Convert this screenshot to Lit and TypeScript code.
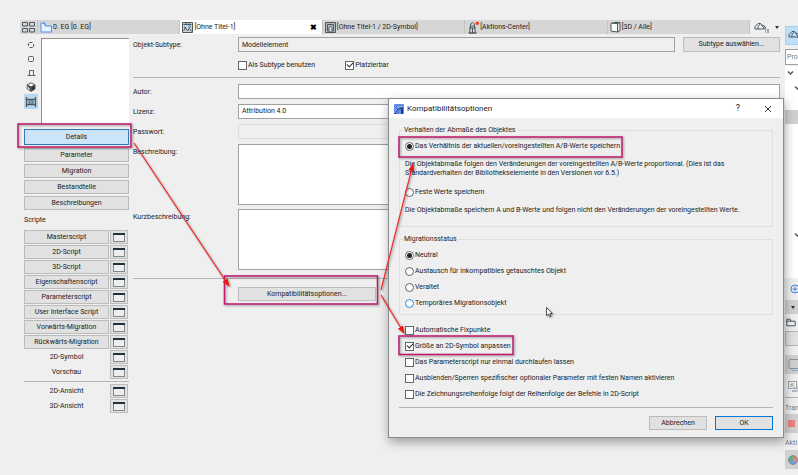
import { LitElement, html, css, svg, nothing } from "lit";
import { customElement, state } from "lit/decorators.js";
import { classMap } from "lit/directives/class-map.js";

const PAGES = ["Details", "Parameter", "Migration", "Bestandteile", "Beschreibungen"];

const SCRIPTS = [
  "Masterscript",
  "2D-Script",
  "3D-Script",
  "Eigenschaftenscript",
  "Parameterscript",
  "User Interface Script",
  "Vorwärts-Migration",
  "Rückwärts-Migration",
];

const STATES = [
  "Neutral",
  "Austausch für inkompatibles getauschtes Objekt",
  "Veraltet",
  "Temporäres Migrationsobjekt",
];

const OPTIONS = [
  "Automatische Fixpunkte",
  "Größe an 2D-Symbol anpassen",
  "Das Parameterscript nur einmal durchlaufen lassen",
  "Ausblenden/Sperren spezifischer optionaler Parameter mit festen Namen aktivieren",
  "Die Zeichnungsreihenfolge folgt der Reihenfolge der Befehle in 2D-Script",
];

const INK = "#4a575e";

const icon = (w: number, h: number, body: unknown) => html`<svg
  class="icon"
  width=${w}
  height=${h}
  viewBox="0 0 ${w} ${h}"
  fill="none"
  stroke=${INK}
  aria-hidden="true"
>
  ${body}
</svg>`;

const icons = {
  grid: icon(13, 11, svg`<path d="M.5.5h5v3.500h-5zM7.500.5h5v3.500h-5zM.5 6.500h5V10h-5zM7.500 6.500h5V10h-5z"/>`),
  story: icon(12, 11, svg`<path d="M1 .8h3.500l1 3.200h6v6H1z" fill="#e6f1ff" stroke="#4c8df0"/><path d="M3 1.500h2v2" stroke="#4c8df0"/>`),
  object: icon(11, 11, svg`<path d="M.5.5h10v10H.5z" fill="#cfd6d9"/><path d="M1.500 2.500h8M4 1v2M7 1v2M1.500 9l2-3.500L5.500 9l2.500-3.500M8 7l1.500 2.500M2 5l2 1"/><circle cx="7.500" cy="4.500" r="1.300" fill="#5b9bea" stroke="none"/>`),
  symbol: icon(11, 11, svg`<path d="M.5.5h10v10H.5z" fill="#b5bcc0"/><path d="M2.500 9V2.500h6V9z"/><path d="M4 9V5.500l1.500-1.300L7 5.500V9" fill="#dfe5e8"/>`),
  tower: icon(12, 13, svg`<path d="M3 5h5M2 7h7M3.500 5l-1 7h6l-1-7M3.500 5V3L5.500 1.500 7.500 3v2M1.500 12h8M5.500 7v5"/><circle cx="10.300" cy="2.300" r="1.700" fill="#ff3b1f" stroke="none"/>`),
  cube: icon(11, 11, svg`<path d="M1 1.500h6.500v8.500L1 9z" fill="#fff"/><path d="M1 1.500L3.500.5H10v8L7.500 10V1.700L10 .5" fill="#e3e7e9"/>`),
  house: icon(15, 11, svg`<path d="M1 7V4.500L4 1.500h2.500L10.500 7zM6.500 1.500L4 4.500V7M8 3l2.500 1 1.500 3"/><path d="M11 8h1M13 8h2M11 10h1M13 10h2"/>`),
  rotate: icon(8, 8, svg`<path d="M1.500 5V2.500l1-1h3M6.500 3v2.500l-1 1h-3M1 3.500l.5 1M7 4.500l-.5-1" stroke="#59656b"/>`),
  square: icon(8, 8, svg`<rect x="1.500" y="1.500" width="5" height="5" rx="1" stroke="#59656b"/>`),
  front: icon(9, 8, svg`<path d="M2.500 6V1.500h4V6M.5 6.500h8" stroke="#59656b"/>`),
  solid: icon(10, 10, svg`<path d="M5 .8l3.800 2v4.200L5 9.200 1.200 7V2.800z" fill="#fff"/><path d="M5 5l3.800-2.200v4.200L5 9.200zM1.200 2.800L5 5v4.200" fill="#22303a"/>`),
  film: icon(12, 10, svg`<path d="M1.500 0v10M10.500 0v10M1.500 2.500h9M1.500 7.500h9" stroke-width="1.300"/><rect x="4" y="4" width="4" height="2" fill="#cfe0ee"/>`),
  window: icon(12, 9, svg`<rect x=".5" y=".5" width="11" height="8" fill="#eee" stroke="#7d888d"/><path d="M0 1h12" stroke="#22303a" stroke-width="2"/>`),
  chevron: icon(7, 6, svg`<path d="M1 1.500l2.500 2.500L6 1.500" stroke-width="1.400"/>`),
  plus: icon(10, 10, svg`<circle cx="5" cy="5" r="4" stroke="#3c86e8"/><path d="M5 2.500v5M2.500 5h5" stroke="#3c86e8"/>`),
  folder: icon(10, 9, svg`<path d="M.8 7.800V1.200h3.400l.8 2h4.200v4.600zM.8 3.200H5"/>`),
  screen: icon(13, 14, svg`<path d="M4 10.500v2h9" stroke="#7fa9e0"/><rect x="1" y="1.500" width="13" height="9" rx="1" stroke="#8d9498"/>`),
  resize: icon(12, 12, svg`<rect x="1.500" y="1.500" width="8" height="7" stroke="#a0a5a8"/><path d="M4 4l4 4M4 7V4h3M5 11h6V6" stroke="#a0a5a8"/><path d="M5 11h4" stroke="#7fa9e0"/>`),
  pie: icon(10, 10, svg`<g stroke="none"><path d="M5 5V.5A4.500 4.500 0 0 1 9 7.200z" fill="#e8837c"/><path d="M5 5l4 2.200a4.500 4.500 0 0 1-8 0z" fill="#6f9ee0"/><path d="M5 5L1 7.200A4.500 4.500 0 0 1 5 .5z" fill="#5fae7e"/></g><circle cx="5" cy="5" r="4.300" stroke="#7c868b"/>`),
  logo: icon(10, 10, svg`<rect width="10" height="10" rx="1" fill="#5b8bea" stroke="none"/><path d="M0 10C1 4.500 4 2 9 2.500V10H7C7.300 7 7.200 5.500 6.800 4.500 4 5 2.500 7 2 10z" fill="#1d3c8f" stroke="none"/><path d="M.8 9C2 4.500 5 2.200 8.800 2.800" stroke="#fff" stroke-width=".8"/>`),
  close: icon(8, 8, svg`<path d="M1 1l6 6M7 1L1 7" stroke="#333"/>`),
};

const TABS = [
  { label: "0. EG [0. EG]", icon: icons.story },
  { label: "[Ohne Titel-1]", icon: icons.object, active: true },
  { label: "[Ohne Titel-1 / 2D-Symbol]", icon: icons.symbol },
  { label: "[Aktions-Center]", icon: icons.tower },
  { label: "[3D / Alle]", icon: icons.cube },
];

const base = css`
  * {
    box-sizing: border-box;
  }
  .icon {
    display: block;
    flex: none;
  }
  button,
  input,
  select,
  textarea {
    font: inherit;
    color: inherit;
    margin: 0;
    border-radius: 0;
  }
  button {
    display: flex;
    align-items: center;
    justify-content: center;
    height: 14px;
    padding: 0;
    border: 1px solid #bcbcbc;
    background: #e1e1e1;
    white-space: nowrap;
  }
  p {
    margin: 0;
  }
  .choice {
    display: flex;
    align-items: center;
    gap: 1px;
    height: 10px;
    white-space: nowrap;
  }
  .choice input {
    appearance: none;
    flex: none;
    display: grid;
    place-items: center;
    width: 9px;
    height: 9px;
    border: 1px solid #666;
    background: #fff;
  }
  .choice input[type="radio"] {
    border-radius: 50%;
  }
  .choice input[type="radio"]:checked::after {
    content: "";
    width: 5px;
    height: 5px;
    border-radius: 50%;
    background: #222;
  }
  .choice input[type="checkbox"]:checked::after {
    content: "";
    width: 5px;
    height: 3px;
    border: solid #333;
    border-width: 0 0 1px 1px;
    transform: translateY(-1px) rotate(-45deg);
  }
  .choice .hot {
    border-color: #2b8ad8;
  }
`;

@customElement("tab-strip")
export class TabStrip extends LitElement {
  static styles = [
    base,
    css`
      :host {
        display: flex;
        height: 14px;
        background: #efefef;
      }
      .overview {
        width: 18px;
        height: 14px;
        border: 0;
        border-right: 1px solid #c4c4c4;
        background: #d6d6d6;
      }
      .tabs {
        flex: 1;
        display: flex;
      }
      .tab {
        flex: 1 1 0;
        min-width: 0;
        justify-content: flex-start;
        gap: 1px;
        padding: 0 2px;
        border: 0;
        border-right: 1px solid #c4c4c4;
        background: #d6d6d6;
      }
      .tab.active {
        background: #fff;
      }
      .label {
        flex: 1;
        text-align: left;
      }
      .close {
        padding-right: 3px;
        font-weight: 700;
        font-size: 8px;
        color: #000;
      }
      .views {
        width: 33px;
        height: 14px;
        gap: 6px;
        border: 0;
        background: none;
      }
      .arrow {
        border: 2px solid transparent;
        border-top: 3px solid #333;
        border-bottom: 0;
      }
    `,
  ];

  render() {
    return html`
      <button class="overview" aria-label="Übersicht">${icons.grid}</button>
      <div class="tabs" role="tablist">
        ${TABS.map(
          (t) => html`<button
            role="tab"
            aria-selected=${t.active ? "true" : "false"}
            class=${classMap({ tab: true, active: !!t.active })}
          >
            ${t.icon}<span class="label">${t.label}</span>${t.active
              ? html`<span class="close">✖</span>`
              : nothing}
          </button>`
        )}
      </div>
      <button class="views" aria-label="Ansichten">${icons.house}<span class="arrow"></span></button>
    `;
  }
}

@customElement("object-nav")
export class ObjectNav extends LitElement {
  @state() private page = "Details";

  static styles = [
    base,
    css`
      :host {
        display: block;
        width: 109px;
        padding: 4px 0 0 4px;
      }
      .top {
        display: flex;
        gap: 3px;
        height: 86px;
        margin-bottom: 5px;
      }
      .modes {
        display: flex;
        flex-direction: column;
      }
      .mode {
        width: 14px;
        height: 14px;
        border: 0;
        background: none;
      }
      .modes .mode:last-child {
        height: 15px;
        background: #b9d8f0;
      }
      .preview {
        flex: 1;
        border: solid #909090;
        border-width: 1px 0 0 1px;
        background: #fff;
      }
      .pages {
        display: grid;
        gap: 2px;
      }
      .pages .on {
        height: 16px;
        margin-bottom: 1px;
        border-color: #2f79b5;
        background: #cce4f7;
      }
      h2 {
        margin: 5px 0;
        font: inherit;
        line-height: 10px;
      }
      .script {
        display: grid;
        grid-template-columns: 1fr 18px;
        gap: 1px;
        padding: 0 1px 1px 0;
        align-items: center;
        text-align: center;
      }
      .views {
        margin-top: 1px;
        padding-top: 2px;
        border-top: 1px solid #b4b4b4;
      }
    `,
  ];

  private row(label: string, editable: boolean) {
    return html`<div class="script">
      ${editable ? html`<button>${label}</button>` : html`<span>${label}</span>`}
      <button aria-label="${label} in Fenster öffnen">${icons.window}</button>
    </div>`;
  }

  render() {
    const modes = [icons.rotate, icons.square, icons.front, icons.solid, icons.film];
    return html`
      <div class="top">
        <div class="modes">
          ${modes.map((m, i) => html`<button class="mode" aria-label="Vorschau ${i + 1}">${m}</button>`)}
        </div>
        <div class="preview"></div>
      </div>
      <div class="pages">
        ${PAGES.map(
          (p) => html`<button class=${classMap({ on: p === this.page })} @click=${() => (this.page = p)}>
            ${p}
          </button>`
        )}
      </div>
      <h2>Scripte</h2>
      ${SCRIPTS.map((s) => this.row(s, true))}
      ${["2D-Symbol", "Vorschau"].map((s) => this.row(s, false))}
      <div class="views">${["2D-Ansicht", "3D-Ansicht"].map((s) => this.row(s, false))}</div>
    `;
  }
}

@customElement("object-form")
export class ObjectForm extends LitElement {
  static styles = [
    base,
    css`
      :host {
        display: block;
        padding: 3px 3px 0 4px;
      }
      .row {
        display: grid;
        grid-template-columns: 105px 1fr;
        margin-bottom: 4px;
      }
      .name {
        line-height: 16px;
      }
      .field {
        width: 100%;
        height: 15px;
        padding: 0 3px;
        border: 1px solid #a0a0a0;
        background: #fff;
        appearance: none;
        outline: none;
      }
      .field.plain {
        background: #efefef;
      }
      .field.off {
        border-color: #dcdcdc;
        background: #efefef;
      }
      textarea.field {
        display: block;
        height: 61px;
        resize: none;
      }
      .subtype {
        display: grid;
        grid-template-columns: 1fr 97px;
        gap: 8px;
      }
      .subtype button {
        height: 15px;
      }
      .checks {
        display: flex;
        gap: 30px;
        margin: 7px 0 7px 105px;
      }
      .line {
        margin: 0 0 6px;
        border: 0;
        border-top: 1px solid #b4b4b4;
      }
      .end {
        margin: 8px 0;
      }
      .compat {
        width: 138px;
        margin-left: 105px;
      }
    `,
  ];

  render() {
    return html`
      <div class="row">
        <label class="name" for="subtype">Objekt-Subtype:</label>
        <div class="subtype">
          <input id="subtype" class="field plain" readonly value="Modellelement" />
          <button>Subtype auswählen...</button>
        </div>
      </div>
      <div class="checks">
        <label class="choice"><input type="checkbox" />Als Subtype benutzen</label>
        <label class="choice"><input type="checkbox" checked />Platzierbar</label>
      </div>
      <hr class="line" />
      <div class="row">
        <label class="name" for="author">Autor:</label>
        <input id="author" class="field" />
      </div>
      <div class="row">
        <label class="name" for="license">Lizenz:</label>
        <select id="license" class="field"><option>Attribution 4.0</option></select>
      </div>
      <div class="row">
        <label class="name" for="password">Passwort:</label>
        <input id="password" class="field off" type="password" disabled />
      </div>
      <div class="row">
        <label class="name" for="description">Beschreibung:</label>
        <textarea id="description" class="field"></textarea>
      </div>
      <div class="row">
        <label class="name" for="short">Kurzbeschreibung:</label>
        <textarea id="short" class="field"></textarea>
      </div>
      <hr class="line end" />
      <button class="compat">Kompatibilitätsoptionen...</button>
    `;
  }
}

@customElement("compat-dialog")
export class CompatDialog extends LitElement {
  static styles = [
    base,
    css`
      :host {
        display: block;
        border: 1px solid #8c8c8c;
        background: #efefef;
        box-shadow: 1px 4px 10px rgba(0, 0, 0, 0.35);
      }
      header {
        display: flex;
        align-items: center;
        height: 19px;
        padding: 0 7px 0 5px;
        background: #fff;
      }
      h1 {
        flex: 1;
        margin: 0 0 0 3px;
        font: inherit;
        font-size: 8px;
      }
      header button {
        width: 16px;
        border: 0;
        background: none;
        font-size: 9px;
      }
      header .help {
        margin-right: 14px;
      }
      .body {
        padding: 7px 10px;
      }
      fieldset {
        display: grid;
        min-width: 0;
        margin: 0 0 7px;
        padding: 6px 5px;
        border: 1px solid #dfdfdf;
      }
      legend {
        margin-left: -2px;
        padding: 0 1px;
        line-height: 10px;
      }
      .ratio {
        gap: 9px;
        padding-bottom: 11px;
      }
      .status {
        gap: 6px;
      }
      .options {
        display: grid;
        gap: 6px;
        padding: 3px 6px 8px;
      }
      footer {
        display: flex;
        justify-content: flex-end;
        gap: 8px;
        padding-top: 8px;
        border-top: 1px solid #b4b4b4;
      }
      footer button {
        width: 58px;
      }
      footer .ok {
        border-color: #0078d7;
      }
    `,
  ];

  render() {
    return html`
      <header>
        ${icons.logo}
        <h1>Kompatibilitätsoptionen</h1>
        <button class="help">?</button>
        <button aria-label="Schließen">${icons.close}</button>
      </header>
      <div class="body">
        <fieldset class="ratio">
          <legend>Verhalten der Abmaße des Objektes</legend>
          <label class="choice"
            ><input type="radio" name="ratio" checked />Das Verhältnis der aktuellen/voreingestellten
            A/B-Werte speichern</label
          >
          <p>
            Die Objektabmaße folgen den Veränderungen der voreingestellten A/B-Werte proportional. (Dies ist das<br />
            Standardverhalten der Bibliothekselemente in den Versionen vor 6.5.)
          </p>
          <label class="choice"><input type="radio" name="ratio" />Feste Werte speichern</label>
          <p>
            Die Objektabmaße speichern A und B-Werte und folgen nicht den Veränderungen der voreingestellten
            Werte.
          </p>
        </fieldset>
        <fieldset class="status">
          <legend>Migrationsstatus</legend>
          ${STATES.map(
            (s, i) => html`<label class="choice"
              ><input
                type="radio"
                name="status"
                class=${classMap({ hot: i === 3 })}
                ?checked=${i === 0}
              />${s}</label
            >`
          )}
        </fieldset>
        <div class="options">
          ${OPTIONS.map(
            (o, i) => html`<label class="choice"><input type="checkbox" ?checked=${i === 1} />${o}</label>`
          )}
        </div>
        <footer>
          <button>Abbrechen</button>
          <button class="ok">OK</button>
        </footer>
      </div>
    `;
  }
}

@customElement("navigator-rail")
export class NavigatorRail extends LitElement {
  static styles = [
    base,
    css`
      :host {
        display: flex;
        flex-direction: column;
        overflow: hidden;
        padding-top: 26px;
        color: #777;
      }
      .cell {
        flex: none;
        justify-content: flex-start;
        width: 40px;
        height: 19px;
        padding-left: 2px;
        border: 1px solid #d0d0d0;
        background: #d0d0d0;
      }
      .home {
        border-color: #a5cdec;
        background: #bfdff7;
      }
      .search {
        flex: none;
        width: 40px;
        height: 16px;
        margin: 4px 0 1px;
        padding: 0 1px;
        border: 1px solid #a0a0a0;
        background: #fff;
      }
      .tree {
        display: grid;
        grid-template-rows: 14px 16px 14px 14px 104px 14px;
        align-items: center;
        height: 212px;
        width: 40px;
        align-content: start;
        background: #fff;
      }
      .tree .icon {
        margin-left: 2px;
      }
      .tree .child {
        margin-left: 7px;
      }
      .tree .selected {
        grid-row: 4;
        align-self: stretch;
        background: #d0d0d0;
      }
      .tree .late {
        grid-row: 6;
        margin-left: 7px;
      }
      .add {
        height: 22px;
        width: 40px;
        border: 0;
        background: none;
        justify-content: flex-start;
        padding-left: 5px;
      }
      .drop {
        height: 14px;
        padding-left: 5px;
      }
      .arrow {
        border: 2px solid transparent;
        border-top: 3px solid #333;
        border-bottom: 0;
      }
      .path {
        display: flex;
        align-items: center;
        height: 17px;
        padding-left: 1px;
      }
      .slot {
        height: 15px;
        border-color: #b4b4b4;
        background: #e1e1e1;
        margin-bottom: 9px;
      }
      .ghost {
        border: 0;
        background: none;
        height: 23px;
      }
      .caption {
        height: 17px;
        padding-top: 6px;
        line-height: 9px;
        white-space: nowrap;
      }
      .group {
        border-top: 1px solid #b4b4b4;
      }
      .stop {
        width: 7px;
        height: 7px;
        background: #ee7f7f;
      }
    `,
  ];

  render() {
    return html`
      <button class="cell home" aria-label="Projekt-Mappe">${icons.house}</button>
      <input class="search" aria-label="Projekt-Mappe durchsuchen" value="Pro" />
      <div class="tree">
        ${icons.chevron}
        <div class="child">${icons.chevron}</div>
        <div class="selected"></div>
        <div class="late">${icons.chevron}</div>
      </div>
      <button class="add" aria-label="Neu">${icons.plus}</button>
      <button class="cell drop" aria-label="Einstellungen"><span class="arrow"></span></button>
      <div class="path">${icons.folder}</div>
      <button class="cell slot" aria-label="Ordner"></button>
      <button class="cell" aria-label="Ausschnitt">${icons.screen}</button>
      <button class="cell ghost" aria-label="Skalieren">${icons.resize}</button>
      <div class="caption group">Tran</div>
      <button class="cell" aria-label="Transparent"><span class="stop"></span></button>
      <div class="caption">Akti</div>
      <button class="cell" aria-label="Farben">${icons.pie}</button>
    `;
  }
}

@customElement("app-root")
export class AppRoot extends LitElement {
  static styles = [
    base,
    css`
      :host {
        display: grid;
        grid-template-columns: 1fr 13px;
        position: relative;
        overflow: hidden;
        min-height: 100vh;
        background: #efefef;
        color: #222;
        font: 7px/9px Roboto, "Noto Sans", sans-serif;
      }
      .editor {
        margin: 20px 2px 0 20px;
      }
      .work {
        display: grid;
        grid-template-columns: auto 1fr;
      }
      .dialog {
        position: absolute;
        left: 388px;
        top: 98px;
        width: 396px;
      }
      .marks {
        position: absolute;
        left: 0;
        top: 0;
        pointer-events: none;
        filter: drop-shadow(1px 1px 1px rgba(0, 0, 0, 0.4));
      }
    `,
  ];

  render() {
    return html`
      <main class="editor">
        <tab-strip></tab-strip>
        <div class="work">
          <object-nav></object-nav>
          <object-form></object-form>
        </div>
      </main>
      <navigator-rail></navigator-rail>
      <compat-dialog class="dialog" role="dialog" aria-label="Kompatibilitätsoptionen"></compat-dialog>
      <svg class="marks" width="798" height="475" fill="none" aria-hidden="true">
        <defs>
          <marker id="tip" markerUnits="userSpaceOnUse" markerWidth="8" markerHeight="6" refX="7" refY="3" orient="auto">
            <path d="M0 0l8 3-8 3z" fill="#f5150f" />
          </marker>
        </defs>
        <g stroke="#c2186c" stroke-width="1.500">
          <rect x="18" y="124" width="113" height="23" />
          <rect x="224.500" y="276" width="153" height="28" />
          <rect x="399" y="137" width="223" height="20" />
          <rect x="399" y="336" width="114" height="18.500" />
        </g>
        <g stroke="#ee2a24" stroke-width="1.200">
          <path d="M134 143L229 286" marker-end="url(#tip)" />
          <path d="M381 290L413 164" marker-end="url(#tip)" />
          <path d="M381 295L404 333" marker-end="url(#tip)" />
        </g>
        <path d="M546.500 307.500v8l2-1.500 1.300 2.700 1.200-.6-1.200-2.600h2.500z" fill="#fff" stroke="#333" stroke-width=".8" />
      </svg>
    `;
  }
}
